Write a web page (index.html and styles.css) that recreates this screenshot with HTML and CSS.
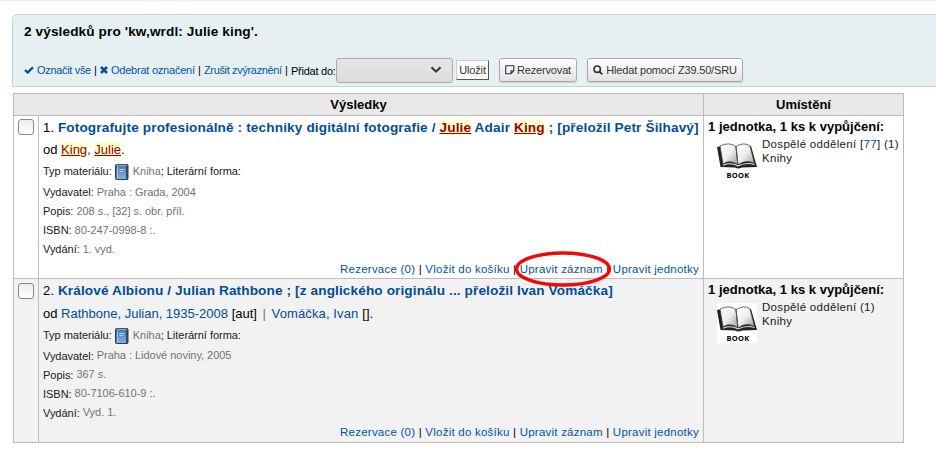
FILE: index.html
```html
<!DOCTYPE html>
<html lang="cs">
<head>
<meta charset="utf-8">
<title>Výsledky</title>
<link rel="stylesheet" href="styles.css">
</head>
<body>
<svg class="defs" width="0" height="0">
  <defs>
    <linearGradient id="cover" x1="0" y1="0" x2="0" y2="1"><stop offset="0" stop-color="#4a79ae"/><stop offset="1" stop-color="#86b1dd"/></linearGradient>
    <linearGradient id="page" x1="0" y1="0" x2="1" y2="1"><stop offset="0" stop-color="#fff"/><stop offset=".5" stop-color="#eee"/><stop offset="1" stop-color="#999"/></linearGradient>
    <symbol id="blue-book" viewBox="0 0 14 16">
      <rect x=".5" y=".5" width="12.5" height="15" rx="1" fill="#2f4f7c" stroke="#263f65"/>
      <path d="M1.500 2h9.500v13H1.500z" fill="url(#cover)"/>
      <path d="M1.500 1.300h10" stroke="#c9dcf0" stroke-width=".8"/>
      <path d="M2.500 2.500v12" stroke="#b4d0ec" stroke-width=".8"/>
      <path d="M4.500 5.500h5M4.500 7.500h4" stroke="#d0e2f4" stroke-width=".8"/>
    </symbol>
    <symbol id="open-book" viewBox="0 0 40 40">
      <rect width="40" height="40" fill="#fff"/>
      <path d="M0 7l3-.5L34 6l6 21-15 .5q-4 2-7 0L3.500 27z" fill="#222"/>
      <path d="M3 6Q12 1.500 19 6.500l2 18.500Q13 19 6 24z" fill="url(#page)" stroke="#333" stroke-width=".7"/>
      <path d="M19 6.500Q27 1.500 33 6l4.500 17.500Q29 19 21 25z" fill="url(#page)" stroke="#333" stroke-width=".7"/>
      <path d="M6 25.200Q14 22 21 26q8-4 16.500-1.500" fill="none" stroke="#e4e4e4" stroke-width="1.100"/>
      <path d="M19 7l2 18" stroke="#555" stroke-width=".9"/>
    </symbol>
  </defs>
</svg>
<div class="topline"></div>
<section class="searchheader">
  <h1>2 výsledků pro 'kw,wrdl: Julie king'.</h1>
  <div class="tools">
    <a class="sel"><svg width="10" height="8" viewBox="0 0 10 8"><path d="M1 4l2.700 2.500L9 1.200" fill="none" stroke="#004d99" stroke-width="2.300"/></svg><span class="t1">Označit vše</span></a><span class="bar">|</span>
    <a class="sel"><svg width="8" height="8" viewBox="0 0 8 8"><path d="M1 1l6 6M7 1L1 7" stroke="#004d99" stroke-width="2.500"/></svg><span class="t2">Odebrat označení</span></a><span class="bar">|</span>
    <a class="t3">Zrušit zvýraznění</a><span class="bar">|</span>
    <span class="addto">Přidat do:</span>
    <div class="select"><svg width="12" height="8" viewBox="0 0 12 8"><path d="M1.500 1.200L6 5.700l4.500-4.500" fill="none" stroke="#333" stroke-width="2"/></svg></div>
    <button class="save">Uložit</button>
    <button class="btn hold"><svg width="10" height="10" viewBox="0 0 10 10"><path d="M.7.700h8.100v5.100L6 8.800H.7zM6 8.800v-3h2.800" fill="none" stroke="#333" stroke-width="1.100"/></svg><span>Rezervovat</span></button>
    <button class="btn z39"><svg width="10" height="10" viewBox="0 0 10 10"><circle cx="4.200" cy="4.200" r="3.200" fill="none" stroke="#333" stroke-width="1.600"/><path d="M6.500 6.500L9.300 9.300" stroke="#333" stroke-width="1.900"/></svg><span>Hledat pomocí Z39.50/SRU</span></button>
  </div>
</section>
<main class="results">
  <div class="cell head head-main">Výsledky</div>
  <div class="cell head">Umístění</div>

  <div class="cell check"><span class="box"></span></div>
  <div class="cell record">
    <div class="title"><span class="num">1.</span> <a class="name n1">Fotografujte profesionálně : techniky digitální fotografie / <mark>Julie</mark> Adair <mark>King</mark> ; [přeložil Petr Šilhavý]</a></div>
    <div class="author">od <a><mark>King</mark>, <mark>Julie</mark></a>.</div>
    <div class="type">Typ materiálu: <svg class="itype" width="14" height="16"><use href="#blue-book"/></svg> <i>Kniha</i>; Literární forma:</div>
    <div class="line">Vydavatel: <i>Praha : Grada, 2004</i></div>
    <div class="line">Popis: <i>208 s., [32] s. obr. příl.</i></div>
    <div class="line">ISBN: <i>80-247-0998-8 :.</i></div>
    <div class="line">Vydání: <i>1. vyd.</i></div>
    <div class="actions"><a>Rezervace (0)</a> | <a>Vložit do košíku</a> | <a class="edit">Upravit záznam<svg class="ring" width="98" height="38" viewBox="0 0 98 38"><ellipse cx="49" cy="19" rx="46.500" ry="16" fill="none" stroke="#f20808" stroke-width="3.400"/></svg></a> | <a>Upravit jednotky</a></div>
  </div>
  <div class="cell place">
    <b>1 jednotka, 1 ks k vypůjčení:</b>
    <div class="item"><div class="pic"><svg width="40" height="40"><use href="#open-book"/></svg><span>BOOK</span></div><p>Dospělé oddělení <span class="call">[<a>77</a>] (1)</span><br>Knihy</p></div>
  </div>

  <div class="cell check alt"><span class="box"></span></div>
  <div class="cell record alt">
    <div class="title"><span class="num">2.</span> <a class="name n2">Králové Albionu / Julian Rathbone ; [z anglického originálu ... přeložil Ivan Vomáčka]</a></div>
    <div class="author people">od <a>Rathbone, Julian, 1935-2008</a> [aut] <span class="sep">|</span> <span class="second"><a>Vomáčka, Ivan</a> [].</span></div>
    <div class="type">Typ materiálu: <svg class="itype" width="14" height="16"><use href="#blue-book"/></svg> <i>Kniha</i>; Literární forma:</div>
    <div class="line">Vydavatel: <i>Praha : Lidové noviny, 2005</i></div>
    <div class="line">Popis: <i>367 s.</i></div>
    <div class="line">ISBN: <i>80-7106-610-9 :.</i></div>
    <div class="line">Vydání: <i>Vyd. 1.</i></div>
    <div class="actions"><a>Rezervace (0)</a> | <a>Vložit do košíku</a> | <a>Upravit záznam</a> | <a>Upravit jednotky</a></div>
  </div>
  <div class="cell place alt">
    <b>1 jednotka, 1 ks k vypůjčení:</b>
    <div class="item"><div class="pic"><svg width="40" height="40"><use href="#open-book"/></svg><span>BOOK</span></div><p>Dospělé oddělení (1)<br>Knihy</p></div>
  </div>
</main>
</body>
</html>
```
FILE: styles.css
```css
* { box-sizing: border-box; }
body { margin: 0; height: 474px; overflow: hidden; background: #fff; color: #000; font-family: "Liberation Sans", Arial, sans-serif; font-size: 13px; }
a { color: #004d99; text-decoration: none; }
i { font-style: normal; color: #727272; }
.defs { position: absolute; }
.topline { height: 1px; background: #e6f0f2; }
.searchheader { margin: 13px -10px 0 12px; height: 73px; padding: 9px 0 0 11px; background: #e6f0f2; border: 1px solid #b9d8d9; border-radius: 5px 0 0 0; }
h1 { margin: 0; font-size: 13.6px; line-height: 16px; letter-spacing: .12px; white-space: nowrap; }
.tools { display: flex; align-items: center; height: 30px; margin-top: 15px; font-size: 11px; white-space: nowrap; }
.tools > * { flex-shrink: 0; }
.tools a { color: #0054a6; }
.sel { display: flex; align-items: center; gap: 3px; }
.t1, .t2, .t3 { line-height: 14px; letter-spacing: -.27px; }
.t1 { width: 54px; letter-spacing: -.33px; }
.t2 { width: 84px; letter-spacing: -.23px; }
.t3 { width: 78px; letter-spacing: -.35px; }
.bar { width: 9px; text-align: center; }
.addto { width: 45px; padding-top: 1px; letter-spacing: -.25px; }
.select { width: 117px; height: 25px; border: 1px solid #aaa; border-radius: 3px; background: linear-gradient(#e6e6e4, #dcdcda); display: flex; align-items: center; justify-content: flex-end; padding-right: 10px; }
button { font: 11px "Liberation Sans", Arial, sans-serif; color: #333; padding: 0; white-space: nowrap; }
.save { width: 33px; height: 20px; margin-left: 3px; padding-bottom: 1px; letter-spacing: -.15px; background: #fbfbfb; border: 1px solid; border-color: #ccc #555 #555 #ccc; }
.btn { height: 24px; display: flex; align-items: center; justify-content: center; gap: 2px; margin-left: 10px; border: 1px solid #aaa; border-radius: 3px; background: linear-gradient(#fff, #e3e3e3); box-shadow: 0 1px 1px #ccc; letter-spacing: -.17px; }
.hold { width: 78px; }
.z39 { width: 156px; gap: 3px; }
.results { display: grid; width: 891px; margin: 6px 0 0 13px; grid-template-columns: 25px 665px 200px; grid-template-rows: 22px 163px 164px; border: solid #bcbcbc; border-width: 1px 0 0 1px; }
.cell { border: solid #bcbcbc; border-width: 0 1px 1px 0; white-space: nowrap; min-width: 0; }
.head { background: #e8e8e8; text-align: center; font-weight: bold; line-height: 21px; }
.head-main { grid-column: span 2; }
.alt { background: #f2f2f2; }
.check { padding: 3px 0 0 4px; }
.check.alt { padding-top: 4px; }
.box { display: block; width: 16px; height: 16px; border: 1px solid #898983; border-radius: 3px; background: linear-gradient(#ededed, #fff); }
.record { padding: 1px 4px 0; }
.title, .author { height: 22px; line-height: 22px; }
.people { height: 23px; line-height: 23px; }
.second { letter-spacing: .12px; }
.name { font-weight: bold; font-size: 13.6px; }
.num { letter-spacing: .2px; }
.n1 { letter-spacing: .14px; }
.n2 { letter-spacing: .12px; }
mark { color: #900; background: #ffc; text-decoration: underline; }
.type, .line { font-size: 11px; color: #202020; letter-spacing: -.03px; }
.type { height: 22px; line-height: 21px; }
.itype { vertical-align: -5px; margin-right: 1px; }
.line { height: 19px; line-height: 19px; }
.alt .line i { position: relative; top: -1px; }
.actions { height: 18px; line-height: 20px; text-align: right; font-size: 11.5px; letter-spacing: .23px; }
.actions a { color: #0054a6; }
.alt .actions { line-height: 18px; }
.edit { position: relative; }
.ring { position: absolute; left: -6px; top: -13px; }
.sep { color: #727272; margin: 0 2px; }
.place { padding: 3px 0 0 4px; }
.place b { display: block; line-height: 16px; letter-spacing: .02px; }
.item { display: flex; padding: 1px 0 0 9px; }
.pic { width: 40px; height: 40px; margin: 4px 5px 0 0; position: relative; flex-shrink: 0; }
.pic svg { display: block; }
.pic span { position: absolute; left: 0; width: 42px; top: 31px; text-align: center; font: bold 7.5px/9px "Open Sans", sans-serif; letter-spacing: .2px; }
.item p { margin: 1px 0 0; font-size: 11.5px; line-height: 14px; letter-spacing: .31px; color: #202020; }
```
